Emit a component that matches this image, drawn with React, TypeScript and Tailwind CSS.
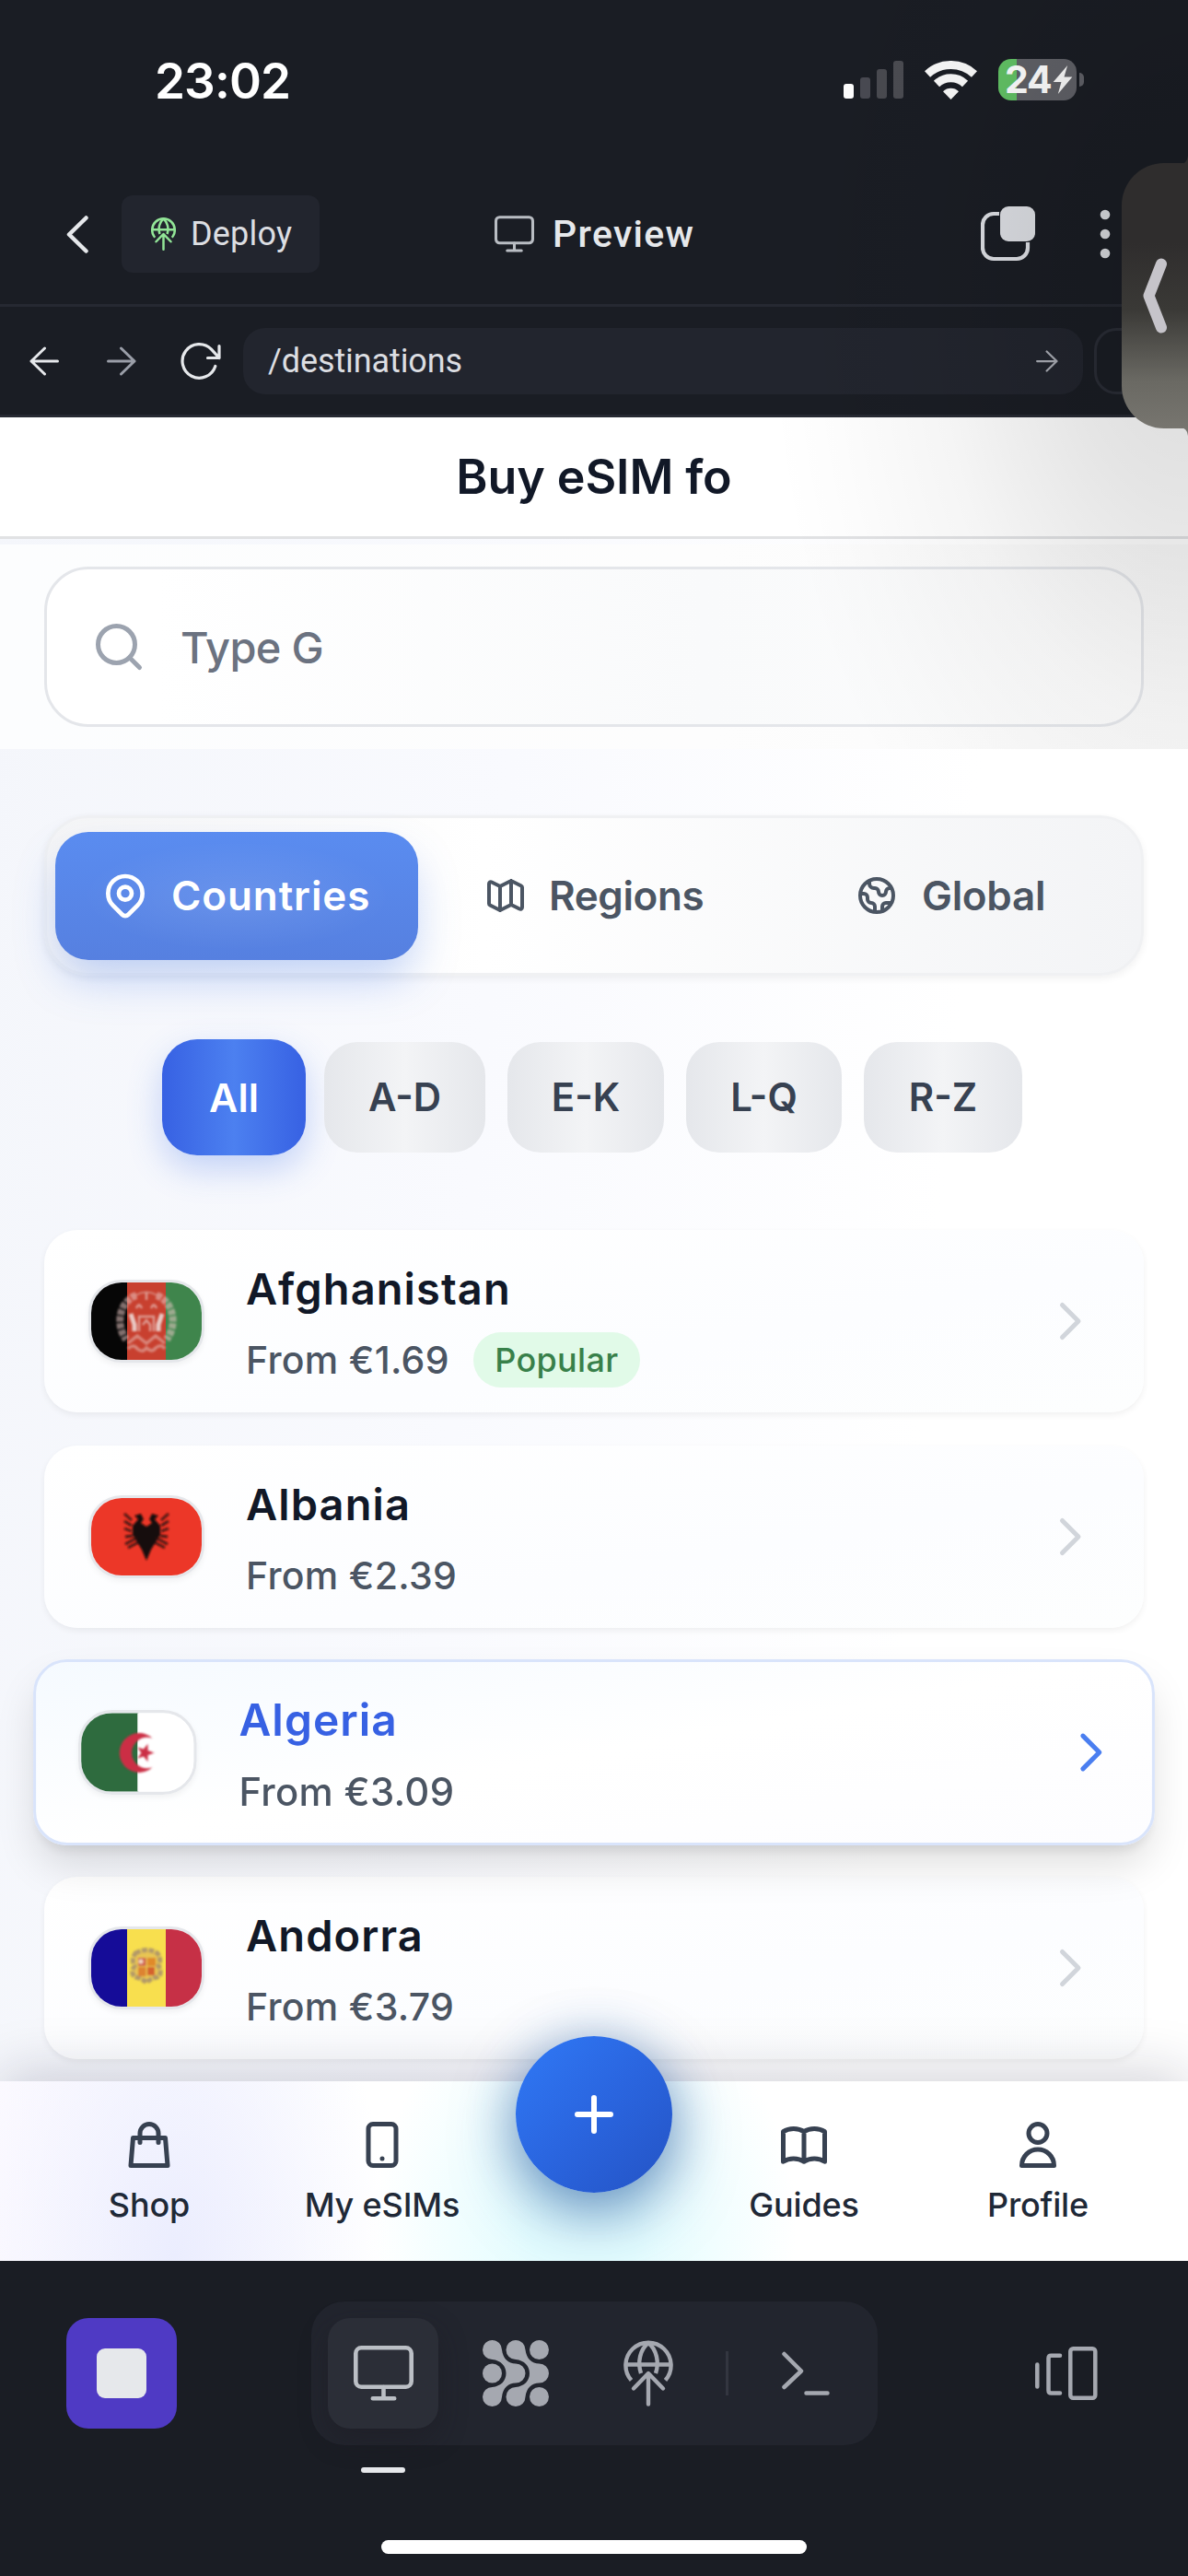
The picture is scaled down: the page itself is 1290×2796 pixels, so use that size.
import React from "react";
import { Search } from "lucide-react";
import {
  HiOutlineBookOpen,
  HiOutlineChevronRight,
  HiOutlineDeviceMobile,
  HiOutlineGlobe,
  HiOutlineLocationMarker,
  HiOutlineMap,
  HiOutlineShoppingBag,
  HiOutlineUser,
} from "react-icons/hi";

function Monitor({ className }: { className: string }) {
  return (
    <svg viewBox="0 0 65 60" fill="none" stroke="currentColor" strokeWidth="4.6" strokeLinecap="round" className={className}>
      <rect x="2.3" y="2.3" width="60.4" height="42.4" rx="6" />
      <path d="M32.5 45v11M20.8 57.2h23.4" />
    </svg>
  );
}

function GlobeUp({ className, stroke }: { className: string; stroke: number }) {
  return (
    <svg viewBox="0 0 54 72" fill="none" stroke="currentColor" strokeWidth={stroke} strokeLinecap="butt" strokeLinejoin="round" className={className}>
      <path d="M8.500 43.500A24.600 24.600 0 1 1 45.500 43.500" />
      <path d="M2.500 26.500h49" />
      <path d="M19 36C15 24 18 10 27 3C36 10 39 24 35 36" />
      <path d="M27 69.500V37M11 52.500L27 36L43 52.500" strokeLinecap="round" />
    </svg>
  );
}

function ArrowGlyph({ className, flip }: { className: string; flip?: boolean }) {
  return (
    <svg viewBox="0 0 32 32" fill="none" stroke="currentColor" strokeWidth="3" strokeLinecap="round" strokeLinejoin="round" className={className}>
      <path d={flip ? "M30.500 16H2M16.500 2L2 16L16.500 30" : "M1.500 16H30M15.500 2L30 16L15.500 30"} />
    </svg>
  );
}

function StatusBar() {
  return (
    <div className="flex h-[178px] items-start justify-between pl-[168px] pr-[113px] pt-[62px]">
      <div className="flex h-[52px] items-center text-[53px] font-semibold leading-none tracking-[-0.900px] text-white">23:02</div>
      <div className="flex h-[49px] items-center">
        <div className="flex h-[41px] items-end gap-[7px]">
          <div className="h-4 w-[11px] rounded-[3px] bg-white" />
          <div className="h-[23px] w-[11px] rounded-[3px] bg-[#494a52]" />
          <div className="h-8 w-[11px] rounded-[3px] bg-[#494a50]" />
          <div className="h-[41px] w-[11px] rounded-[3px] bg-[#4b4c52]" />
        </div>
        <svg viewBox="0 0 57 42" className="ml-[23px] h-[42px] w-[57px]" fill="none" stroke="#fafafa" strokeWidth="9">
          <path d="M3 14.500A37.500 37.500 0 0 1 54 14.500" />
          <path d="M13 25A22.500 22.500 0 0 1 44 25" />
          <path d="M28.500 42L20 33.200A12.500 12.500 0 0 1 37 33.200Z" fill="#fafafa" stroke="none" />
        </svg>
        <div className="ml-[23px] flex h-[45px] w-[85px] items-center rounded-[14px] bg-[linear-gradient(90deg,#62c265_24%,#606167_24%)] pl-[7px] text-white">
          <span className="w-[51px] shrink-0 whitespace-nowrap text-[41px] font-bold leading-[45px] tracking-[-1.200px]">24</span>
          <svg viewBox="0 0 20 30" className="ml-px h-[31px] w-[22px] shrink-0" fill="#fafafa">
            <path d="M15 0L0 17.500H8.500L5 30L20 12H11.500Z" />
          </svg>
        </div>
        <div className="ml-[3px] h-[15px] w-[5px] rounded-r-full bg-[#606167]" />
      </div>
    </div>
  );
}

function AppBar() {
  return (
    <div className="flex h-[155px] items-center border-b-[3px] border-[#262932] pl-[72px] font-[Roboto,sans-serif]">
      <svg viewBox="0 0 24 41" className="h-[41px] w-6" fill="none" stroke="#e6e8eb" strokeWidth="4.500" strokeLinecap="round" strokeLinejoin="round">
        <path d="M21.500 2.500L3 20.500L21.500 38.500" />
      </svg>
      <div className="ml-9 flex h-[84px] w-[215px] items-center rounded-xl bg-[#22252e] pl-8">
        <GlobeUp stroke={5} className="h-9 w-[27px] text-[#92e597]" />
        <span className="ml-4 text-[36px] leading-none tracking-[0.200px] text-[#dcdee2]">Deploy</span>
      </div>
      <Monitor className="ml-[190px] h-10 w-[43px] text-[#b9bdc3]" />
      <span className="ml-[20px] w-[180px] whitespace-nowrap text-[41px] font-medium leading-none tracking-[1.300px] text-[#e6e8eb]">Preview</span>
      <svg viewBox="0 0 60 60" className="ml-[285px] h-[60px] w-[60px]">
        <rect x="2" y="8" width="49" height="49" rx="12" fill="none" stroke="#dee0e5" strokeWidth="4.200" />
        <rect x="20" y="-2" width="42" height="41" rx="9" fill="#1a1d24" />
        <rect x="21" y="0" width="38" height="38" rx="9" fill="#dee0e5" />
      </svg>
      <svg viewBox="0 0 12 54" className="ml-[69px] h-[54px] w-3" fill="#dcdee2">
        <circle cx="6" cy="6" r="5.300" />
        <circle cx="6" cy="27" r="5.300" />
        <circle cx="6" cy="48" r="5.300" />
      </svg>
    </div>
  );
}

function AddressBar() {
  return (
    <div className="flex h-[120px] items-center border-b-[3px] border-[#262932] pl-8">
      <ArrowGlyph flip className="h-8 w-8 text-[#e6e8eb]" />
      <ArrowGlyph className="ml-[52px] h-8 w-8 text-[#9a9ea8]" />
      <svg viewBox="0 0 44 40" className="ml-12 h-10 w-11" fill="none" stroke="#e6e8eb" strokeWidth="3.200" strokeLinecap="round" strokeLinejoin="round">
        <path d="M37.800 25.500A18.300 18.300 0 1 1 33.500 7.200L42 16.500M42 3.500V16.500H29.500" />
      </svg>
      <div className="ml-6 flex h-[72px] w-[912px] items-center justify-between rounded-3xl bg-[#22252e] pl-[27px] pr-[27px]">
        <span className="font-[Roboto,sans-serif] text-[36px] leading-none tracking-[-0.100px] text-[#dcdee2]">/destinations</span>
        <ArrowGlyph className="h-6 w-6 text-[#abaeb6]" />
      </div>
      <div className="ml-3 h-[72px] flex-1 rounded-l-3xl border-[3px] border-r-0 border-[#2a2d36]" />
    </div>
  );
}

const flags: Record<string, React.ReactNode> = {
  Afghanistan: (
    <>
      <rect width="40" height="84" fill="#060606" />
      <rect x="39" width="43" height="84" fill="#c8402f" />
      <rect x="81" width="40" height="84" fill="#3f854c" />
      <g fill="none" stroke="#e9c9c4" filter="url(#soft)">
        <path d="M49 14C32 20 25 44 38 62" strokeWidth="8" strokeDasharray="6 1.500" opacity="0.550" />
        <path d="M71 14C88 20 95 44 82 62" strokeWidth="8" strokeDasharray="6 1.500" opacity="0.550" />
        <path d="M48 14Q60 7 72 14" strokeWidth="2" opacity="0.500" />
        <path d="M43 34L47 46V53M77 34L73 46V53" strokeWidth="5" />
        <path d="M52 53V37H68V53M56 46l4-5 4 5v7M49 28q3-7 6 0M65 28q3-7 6 0M60 11v8" strokeWidth="2.500" opacity="0.650" />
        <path d="M40 66L50 58L60 66L70 58L80 66M40 72q6-6 10 0q6 5 10-1q6 6 10 0q6-5 10 1" strokeWidth="3.500" opacity="0.500" />
      </g>
    </>
  ),
  Albania: (
    <>
      <rect width="120" height="84" fill="#ec3728" />
      <g fill="#180c0a" filter="url(#soft)">
        <path d="M60 68L55 56L50 48L45 40L45 30L51 23L47 19L54 17L57 23L54 27L60 31L66 27L63 23L66 17L73 19L69 23L75 30L75 40L70 48L65 56Z" />
        <path
          d="M44 24l-8-7M44 30l-8-5M44 36l-8-3M45 41l-8 1M50 43l-13 7M51 48l-11 6M76 24l8-7M76 30l8-5M76 36l8-3M75 41l8 1M70 43l13 7M69 48l11 6"
          stroke="#2b0f0c"
          strokeWidth="2.800"
          opacity="0.850"
        />
      </g>
    </>
  ),
  Algeria: (
    <>
      <rect width="61" height="84" fill="#2e6b3e" />
      <rect x="60" width="60" height="84" fill="#fff" />
      <g fill="#cb2f45" filter="url(#soft)">
        <path d="M76 27A21 21 0 1 0 76 58A16.500 16.500 0 1 1 76 27Z" />
        <path d="M78 42.500L71 45L71 52L66.500 46.500L60 48.500L64 42.500L60 36.500L66.500 38.500L71 33L71 40Z" />
      </g>
    </>
  ),
  Andorra: (
    <>
      <rect width="40" height="84" fill="#150c98" />
      <rect x="39" width="43" height="84" fill="#f8df4e" />
      <rect x="81" width="40" height="84" fill="#c63046" />
      <g filter="url(#soft)">
        <path d="M48 26q12-7 24 0q5 8 1 14q5 8-1 12q-7 1-12 6q-5-5-12-6q-6-4-1-12q-4-6 1-14z" fill="#e8c552" stroke="#b39a68" strokeWidth="5" strokeDasharray="6 1.500" />
        <rect x="51" y="31" width="8.500" height="9" fill="#d2604e" />
        <rect x="61" y="31" width="9" height="9" fill="#e08a2c" />
        <rect x="51" y="41" width="8.500" height="10" fill="#dd8330" />
        <rect x="61" y="41" width="8" height="9" fill="#d4622f" />
        <circle cx="54" cy="35" r="2.500" fill="#f0d6c0" />
      </g>
    </>
  ),
};

function Flag({ name }: { name: string }) {
  return (
    <div className="h-[90px] w-[126px] overflow-hidden rounded-[36px] border-[3px] border-[#e5e7eb] shadow-[0_3px_6px_rgba(0,0,0,0.050)]">
      <svg viewBox="0 0 120 84" preserveAspectRatio="none" className="h-[84px] w-[120px]">
        {flags[name]}
      </svg>
    </div>
  );
}

function CountryCard({ name, price, popular, active }: { name: string; price: string; popular?: boolean; active?: boolean }) {
  return (
    <div
      className={
        active
          ? "flex h-[198px] scale-[1.020] items-center rounded-[36px] border-[3px] border-[#d9e4fb] bg-[linear-gradient(170deg,#f5faff,#ffffff_50%,#fdfdff)] pl-[45px] pr-12 shadow-[0_24px_44px_-4px_rgba(0,0,0,0.130),0_9px_14px_-6px_rgba(0,0,0,0.100)]"
          : "flex h-[198px] items-center rounded-[36px] bg-[linear-gradient(170deg,#ffffff,#fcfdff_60%,#fdfefe)] pl-12 pr-[51px] shadow-[0_3px_7px_rgba(0,0,0,0.060)]"
      }
    >
      <Flag name={name} />
      <div className="ml-[45px] flex flex-1 flex-col">
        <div
          className={
            active
              ? "flex h-[72px] items-center text-[47px] font-semibold leading-none tracking-[1px] text-[#3761e3]"
              : "flex h-[72px] items-center text-[47px] font-semibold leading-none tracking-[1.100px] text-[#111827]"
          }
        >
          {name}
        </div>
        <div className="mt-3 flex h-[60px] items-center">
          <span className="text-[41px] font-medium leading-none tracking-[0.300px] text-[#4b5563]">From {price}</span>
          {popular && (
            <span className="ml-[26px] flex h-[60px] w-[181px] items-center justify-center rounded-full bg-[#e1fae8] text-[36px] font-medium leading-none tracking-[0.300px] text-[#38804a]">
              Popular
            </span>
          )}
        </div>
      </div>
      <HiOutlineChevronRight className={active ? "h-[60px] w-[60px] translate-x-3 text-[#4a7ef0]" : "h-[60px] w-[60px] text-[#d1d5db]"} />
    </div>
  );
}

const chips = [
  { label: "A-D", width: "w-[175px]" },
  { label: "E-K", width: "w-[170px]" },
  { label: "L-Q", width: "w-[169px]" },
  { label: "R-Z", width: "w-[172px]" },
];

function BottomNav() {
  const label = "mt-[11px] flex h-12 items-center whitespace-nowrap text-[36px] font-medium leading-none tracking-[-0.150px] text-[#1f2937]";
  const item = "flex w-[200px] flex-col items-center text-[#374151]";
  return (
    <div className="absolute inset-x-0 bottom-0 flex h-[195px] items-start bg-white bg-[radial-gradient(ellipse_230px_420px_at_190px_190px,#ebedfe,rgba(255,255,255,0)),radial-gradient(ellipse_230px_270px_at_635px_160px,#e4fdff_25%,rgba(255,255,255,0)),linear-gradient(90deg,#fcfaff,#ffffff_30%)] pl-[62px] pt-[39px] shadow-[0_-6px_60px_rgba(20,20,50,0.200)]">
      <div className={item}>
        <HiOutlineShoppingBag className="h-[60px] w-[60px]" />
        <span className={label}>Shop</span>
      </div>
      <div className="ml-[53px]">
        <div className={item}>
          <HiOutlineDeviceMobile className="h-[60px] w-[60px]" />
          <span className={label}>My eSIMs</span>
        </div>
      </div>
      <div className="-mt-[88px] ml-[45px] flex h-[170px] w-[170px] items-center justify-center rounded-full bg-[linear-gradient(135deg,#3079f6,#2a65df_50%,#2453c4)] text-white shadow-[0_24px_66px_rgba(20,75,150,0.520),0_0_54px_rgba(40,100,170,0.280)]">
        <svg viewBox="0 0 42 42" className="h-[42px] w-[42px]" stroke="currentColor" strokeWidth="6" strokeLinecap="round">
          <path d="M21 3v36M3 21h36" />
        </svg>
      </div>
      <div className="ml-[43px]">
        <div className={item}>
          <HiOutlineBookOpen className="h-[60px] w-[60px]" />
          <span className={label}>Guides</span>
        </div>
      </div>
      <div className="ml-[54px]">
        <div className={item}>
          <HiOutlineUser className="h-[60px] w-[60px]" />
          <span className={label}>Profile</span>
        </div>
      </div>
    </div>
  );
}

function Content() {
  return (
    <div className="relative h-[2001px] overflow-hidden bg-[linear-gradient(95deg,#f4f6fb,#f9fafe_40%,#ffffff_75%)]">
      <div className="flex h-[132px] items-center justify-center border-b-[3px] border-[#e1e2e4] bg-white text-[52px] font-semibold leading-none tracking-[-0.100px] text-[#111827]">
        Buy eSIM fo
      </div>
      <div className="mt-1.5 h-[222px] bg-[linear-gradient(90deg,#fcfdfe,#fdfdfd_60%,#fafafa)] px-12 pt-6">
        <div className="flex h-[174px] items-center rounded-[48px] border-[3px] border-[#e4e6ea] bg-[linear-gradient(90deg,#ffffff_10%,#f9fafb_60%,#fcfcfc)] pl-12">
          <Search className="h-[60px] w-[60px] text-[#9ca3af]" />
          <span className="ml-[37px] text-[47px] font-medium leading-none tracking-[-0.700px] text-[#6b7280]">Type G</span>
        </div>
      </div>
      <div className="px-12 pt-[72px]">
        <div className="flex h-[174px] items-center rounded-[48px] border-[3px] border-[#f0f1f3] bg-[linear-gradient(90deg,#f5f5f6,#ffffff_40%,#f3f4f6)] pl-[9px] text-[44px] font-semibold leading-none text-[#4b5563] shadow-[0_3px_9px_rgba(0,0,0,0.060)]">
          <div className="flex h-[139px] w-[394px] items-center rounded-[36px] bg-[radial-gradient(ellipse_at_50%_50%,rgba(255,255,255,0.100),rgba(255,255,255,0)_60%),linear-gradient(180deg,#5a8cf0,#5680e0)] pl-12 text-white shadow-[0_24px_48px_-6px_rgba(80,130,235,0.360)]">
            <HiOutlineLocationMarker className="h-14 w-14" />
            <span className="ml-[22px] tracking-[0.900px]">Countries</span>
          </div>
          <HiOutlineMap className="ml-[71px] h-12 w-12" />
          <span className="ml-[23px] w-[170px] tracking-[-0.400px]">Regions</span>
          <HiOutlineGlobe className="ml-[162px] h-12 w-12" />
          <span className="ml-[25px] tracking-[-0.300px]">Global</span>
        </div>
      </div>
      <div className="mt-[69px] flex h-[126px] items-center pl-44 text-[42px] font-semibold leading-none text-[#374151]">
        <div className="flex h-[126px] w-[156px] items-center justify-center rounded-[38px] bg-[linear-gradient(90deg,#3761e3,#4c80f0_50%,#3761e3)] text-[43px] text-white shadow-[0_15px_36px_rgba(60,110,235,0.280)]">All</div>
        <div className="ml-5 flex gap-6">
          {chips.map((c) => (
            <div key={c.label} className={"flex h-[120px] items-center justify-center rounded-[36px] bg-[linear-gradient(90deg,#e5e7eb,#f3f4f6_50%,#e5e7eb)] " + c.width}>
              {c.label}
            </div>
          ))}
        </div>
      </div>
      <div className="mt-[81px] flex flex-col gap-9 px-12">
        <CountryCard name="Afghanistan" price="€1.69" popular />
        <CountryCard name="Albania" price="€2.39" />
        <CountryCard name="Algeria" price="€3.09" active />
        <CountryCard name="Andorra" price="€3.79" />
      </div>
      <BottomNav />
    </div>
  );
}

function NodeGrid() {
  return (
    <svg viewBox="0 0 72 72" className="h-[72px] w-[72px]" fill="#a5a8b0">
      <circle cx="61.500" cy="10.500" r="10.500" />
      <circle cx="10.500" cy="36" r="10.500" />
      <circle cx="61.500" cy="61.500" r="10.500" />
      <path d="M10.500 0A10.500 10.500 0 0 1 21 10.500C22 20 28 25.500 36 25.500A10.500 10.500 0 0 1 36 46.500C28 46.500 22 52 21 61.500A10.500 10.500 0 1 1 10.500 51C20 50 25.500 44 25.500 36C25.500 28 20 22 10.500 21A10.500 10.500 0 0 1 10.500 0Z" />
      <path d="M36 0A10.500 10.500 0 0 1 46.500 10.500C47.500 20 53.500 25.500 61.500 25.500A10.500 10.500 0 0 1 61.500 46.500C53.500 46.500 47.500 52 46.500 61.500A10.500 10.500 0 1 1 36 51C45.500 50 51 44 51 36C51 28 45.500 22 36 21A10.500 10.500 0 0 1 36 0Z" />
    </svg>
  );
}

function Dock() {
  return (
    <div className="flex h-[342px] flex-col pt-11">
      <div className="flex h-[156px] items-center pl-[72px]">
        <div className="flex h-[120px] w-[120px] items-center justify-center rounded-3xl bg-[#4f3ac4]">
          <div className="h-[54px] w-[54px] rounded-[9px] bg-[#e6e8eb]" />
        </div>
        <div className="ml-[146px] flex h-[156px] w-[615px] items-center rounded-[36px] bg-[#22252e] pl-[18px] text-[#a5a8b0]">
          <div className="flex h-[120px] w-[120px] items-center justify-center rounded-3xl bg-[#2b2e37] shadow-[0_12px_30px_rgba(27,24,32,0.400)]">
            <Monitor className="h-[60px] w-[65px] text-[#bbbfc5]" />
          </div>
          <div className="ml-12">
            <NodeGrid />
          </div>
          <GlobeUp stroke={4.4} className="ml-[81px] h-[72px] w-[54px]" />
          <div className="ml-[57px] h-12 w-[3px] bg-[#333640]" />
          <svg viewBox="0 0 54 48" className="ml-[57px] h-12 w-[54px]" fill="none" stroke="currentColor" strokeWidth="4.500" strokeLinecap="round" strokeLinejoin="round">
            <path d="M3.500 3L22 21.500L3.500 39M27.500 45.500h23" />
          </svg>
        </div>
        <svg viewBox="0 0 68 58" className="ml-[171px] h-[58px] w-[68px]" fill="none" stroke="#a5a8b0" strokeWidth="4.500" strokeLinecap="round" strokeLinejoin="round">
          <path d="M2.300 19.500V43.500M27 9.800H17.500Q14.500 9.800 14.500 12.800V47.500Q14.500 50.500 17.500 50.500H27" />
          <rect x="38.300" y="2.300" width="27" height="53.400" rx="3" />
        </svg>
      </div>
      <div className="ml-[392px] mt-6 h-1.5 w-12 rounded-full bg-[#e6e8eb]" />
      <div className="ml-[414px] mt-[73px] h-[15px] w-[462px] rounded-full bg-white" />
    </div>
  );
}

function SideTab() {
  return (
    <>
      <div className="pointer-events-none absolute right-0 top-0 h-[813px] w-[600px] bg-[radial-gradient(ellipse_460px_760px_at_100%_321px,rgba(0,0,0,0.140)_5%,rgba(0,0,0,0.100)_30%,rgba(0,0,0,0.040)_60%,rgba(0,0,0,0.010)_85%,rgba(0,0,0,0))]" />
      <div className="absolute right-0 top-[177px] h-[288px] w-[72px]">
        <div className="flex h-full w-full items-start rounded-l-[46px] bg-[linear-gradient(180deg,#2f2d2d_30%,#3a3936_55%,#6a6963_82%,#77756f)] pl-[23px] pt-[103px]">
          <svg viewBox="0 0 27 82" className="h-[82px] w-[27px]" fill="none" stroke="#c6c4ca" strokeWidth="12" strokeLinecap="round" strokeLinejoin="round">
            <path d="M20 6.500L6.500 41L20 75.500" />
          </svg>
        </div>
        <svg viewBox="0 0 9 9" className="absolute -top-[8px] right-0 h-[9px] w-[9px]" fill="#2f2d2d">
          <path d="M0 9Q8 9 9 0V9Z" />
        </svg>
        <svg viewBox="0 0 9 9" className="absolute -bottom-[8px] right-0 h-[9px] w-[9px]" fill="#77756f">
          <path d="M0 0Q8 0 9 9V0Z" />
        </svg>
      </div>
    </>
  );
}

export default function App() {
  return (
    <div className="relative h-[2796px] w-[1290px] overflow-hidden bg-[#1a1d24] font-[Inter,sans-serif]">
      <svg width="0" height="0" className="absolute">
        <filter id="soft">
          <feGaussianBlur stdDeviation="1" />
        </filter>
      </svg>
      <StatusBar />
      <AppBar />
      <AddressBar />
      <Content />
      <Dock />
      <SideTab />
    </div>
  );
}
